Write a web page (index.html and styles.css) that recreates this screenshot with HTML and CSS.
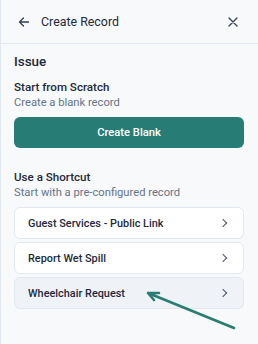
FILE: index.html
```html
<!DOCTYPE html>
<html lang="en">
<head>
  <meta charset="UTF-8">
  <meta name="viewport" content="width=device-width, initial-scale=1">
  <title>Create Record</title>
  <link rel="stylesheet" href="styles.css">
</head>

<body>
  <div class="panel">
    <div class="header">
      <button class="icon-btn back" aria-label="Back">
        <svg width="12" height="12" viewBox="0 0 12 12" fill="none" stroke="#334155" stroke-width="1.3" stroke-linecap="round" stroke-linejoin="round">
          <path d="M10.5 6H1.5M5.5 2L1.5 6l4 4"/>
        </svg>
      </button>
      <h1>Create Record</h1>
      <button class="icon-btn close" aria-label="Close">
        <svg width="10" height="10" viewBox="0 0 10 10" fill="none" stroke="#334155" stroke-width="1.3" stroke-linecap="round">
          <path d="M1 1l8 8M9 1l-8 8"/>
        </svg>
      </button>
    </div>

    <div class="content">
      <h2>Issue</h2>

      <div class="section">
        <div class="section-title">Start from Scratch</div>
        <div class="section-sub">Create a blank record</div>
        <button class="primary">Create Blank</button>
      </div>

      <div class="section shortcuts">
        <div class="section-title">Use a Shortcut</div>
        <div class="section-sub">Start with a pre-configured record</div>
        <div class="list">
          <div class="item">Guest Services - Public Link <span class="chev"></span></div>
          <div class="item">Report Wet Spill <span class="chev"></span></div>
          <div class="item active">Wheelchair Request <span class="chev"></span></div>
        </div>
      </div>
    </div>

    <!-- pointer annotation -->
    <svg class="pointer" width="100" height="45" viewBox="0 0 100 45" fill="none" stroke="#2a7d72" stroke-width="2.6" stroke-linecap="round" stroke-linejoin="round">
      <path d="M89 38L3 3M3 3l11 0M3 3l6 7"/>
    </svg>
  </div>
</body>
</html>
```

FILE: styles.css
```css
body {
  margin: 0;
  font-family: Roboto, 'Noto Sans', sans-serif;
  background: #f8f9fa;
  color: #1e293b;
}
.panel {
  position: relative;
  min-height: 344px;
  border-left: 1px solid #e2e8f0;
  box-sizing: border-box;
}
.header {
  display: flex;
  align-items: center;
  height: 43px;
  padding: 0 14px 0 17px;
  border-bottom: 1px solid #e2e8f0;
}
.header h1 {
  flex: 1;
  margin: 0 0 0 11px;
  font-size: 12.4px;
  font-weight: 400;
  color: #1e293b;
}
.icon-btn {
  background: none;
  border: none;
  padding: 0;
  display: flex;
  align-items: center;
  cursor: pointer;
}
.close {
  margin-right: 6px;
}
.content {
  padding: 8px 14px 0 13px;
}
h2 {
  margin: 0;
  font-size: 13.4px;
  line-height: 20px;
  font-weight: 500;
  color: #1e293b;
}
.section {
  margin-top: 7px;
}
.section-title {
  font-size: 11.6px;
  font-weight: 500;
  line-height: 16px;
}
.section-sub {
  font-size: 11.2px;
  line-height: 16px;
  color: #64748b;
}
.primary {
  display: block;
  width: 100%;
  height: 31px;
  margin-top: 6px;
  border: none;
  border-radius: 6px;
  background: #277d76;
  color: #fff;
  font-family: inherit;
  font-size: 11.2px;
  font-weight: 500;
  cursor: pointer;
}
.shortcuts {
  margin-top: 21px;
}
.list {
  display: flex;
  flex-direction: column;
  gap: 3px;
  margin-top: 6px;
}
.item {
  display: flex;
  align-items: center;
  justify-content: space-between;
  height: 30px;
  padding: 0 17px 0 13px;
  background: #fff;
  border: 1px solid #e2e8f0;
  border-radius: 6px;
  font-size: 10.9px;
  font-weight: 500;
  color: #1e293b;
}
.item.active {
  background: #eff3f8;
}
.chev {
  width: 5px;
  height: 5px;
  border-top: 1.4px solid #475569;
  border-right: 1.4px solid #475569;
  transform: rotate(45deg);
}
.pointer {
  position: absolute;
  left: 144px;
  top: 290px;
}
```
